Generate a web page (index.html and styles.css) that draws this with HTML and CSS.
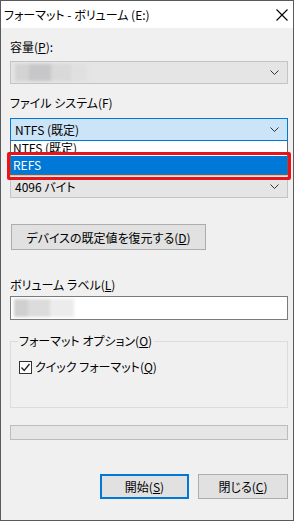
FILE: index.html
```html
<!DOCTYPE html>
<html lang="ja">
<head>
<meta charset="utf-8">
<link rel="stylesheet" href="styles.css">
</head>
<body>
<div class="window">
  <div class="titlebar">
    <span class="title">フォーマット - ボリューム (E:)</span>
    <svg class="close" width="12" height="12" viewBox="0 0 12 12"><path d="M0.5 0.5 L11.5 11.5 M11.5 0.5 L0.5 11.5" stroke="#000" stroke-width="1.1" fill="none"/></svg>
  </div>
  <div class="content">
    <div class="label l-cap">容量(<u>P</u>):</div>
    <div class="combo combo-gray combo-cap">
      <div class="blur"><span class="b1"></span><span class="b2"></span><span class="b3"></span><span class="b4"></span></div>
      <svg class="chev" width="9" height="5" viewBox="0 0 9 5"><path d="M0.5 0.5 L4.5 4.5 L8.5 0.5" stroke="#333" fill="none"/></svg>
    </div>
    <div class="label l-fs">ファイル システム(F)</div>
    <div class="fs-wrap">
      <div class="combo combo-open">
        <span class="ctext">NTFS (既定)</span>
        <svg class="chev" width="9" height="5" viewBox="0 0 9 5"><path d="M0.5 0.5 L4.5 4.5 L8.5 0.5" stroke="#333" fill="none"/></svg>
      </div>
      <div class="droplist">
        <div class="item">NTFS (既定)</div>
        <div class="item sel">REFS</div>
      </div>
      <div class="highlight"></div>
    </div>
    <div class="combo combo-gray combo-alloc">
      <span class="ctext">4096 バイト</span>
      <svg class="chev" width="9" height="5" viewBox="0 0 9 5"><path d="M0.5 0.5 L4.5 4.5 L8.5 0.5" stroke="#333" fill="none"/></svg>
    </div>
    <button class="btn btn-restore">デバイスの既定値を復元する(<u>D</u>)</button>
    <div class="label l-vol">ボリューム ラベル(<u>L</u>)</div>
    <div class="input">
      <div class="blur blur-w"><span class="b1"></span><span class="b2"></span><span class="b3"></span></div>
    </div>
    <fieldset class="group">
      <legend>フォーマット オプション(<u>O</u>)</legend>
      <div class="check-row">
        <span class="checkbox"><svg width="11" height="11" viewBox="0 0 11 11"><path d="M1.5 5.5 L4.2 8.5 L9.5 2" stroke="#222" stroke-width="1.3" fill="none"/></svg></span>
        <span>クイック フォーマット(<u>Q</u>)</span>
      </div>
    </fieldset>
    <div class="progress"></div>
    <div class="actions">
      <button class="btn btn-act btn-focus">開始(<u>S</u>)</button>
      <button class="btn btn-act">閉じる(<u>C</u>)</button>
    </div>
  </div>
</div>
</body>
</html>
```
FILE: styles.css
```css
* { box-sizing: border-box; }
html, body { margin: 0; padding: 0; background: #fff; }
body {
  font-family: "Noto Sans CJK JP", "Noto Sans", sans-serif;
  font-size: 12px;
  color: #000;
  font-feature-settings: "palt";
}
.window {
  width: 294px;
  height: 521px;
  border: 1px solid #5a5a5a;
  background: #f0f0f0;
  display: flex;
  flex-direction: column;
}
.titlebar {
  height: 27px;
  background: #fff;
  display: flex;
  align-items: center;
  justify-content: space-between;
  padding: 0 5px 0 3px;
  flex: none;
}
.title { font-size: 12px; line-height: 16px; }
.content {
  padding: 0 5px 0 9px;
  display: flex;
  flex-direction: column;
  flex: 1;
}
.label { line-height: 16px; height: 16px; }
.l-cap { margin-top: 11px; }
.combo {
  height: 23px;
  border: 1px solid #adadad;
  display: flex;
  align-items: center;
  padding: 0 8px 0 4px;
  position: relative;
  flex: none;
}
.combo-gray { background: #e5e5e5; border-color: #c4c4c4; }
.combo-cap { margin-top: 6px; }
.chev { margin-left: auto; }
.ctext { line-height: 16px; }
.l-fs { margin-top: 11px; }
.fs-wrap { position: relative; margin-top: 7px; z-index: 2; }
.combo-open { background: #cce4f7; border-color: #0078d7; }
.droplist {
  position: absolute;
  left: 0;
  right: 0;
  top: 23px;
  background: #fff;
  border: 1px solid #646464;
  border-top: none;
}
.item { height: 15px; line-height: 14px; padding-left: 2px; overflow: hidden; }
.item.sel { height: 18px; line-height: 17px; background: #0078d7; color: #fff; }
.highlight {
  position: absolute;
  left: -3px;
  right: -3px;
  top: 34px;
  height: 28px;
  border: 3px solid #e8141c;
  border-radius: 2px;
}
.combo-alloc { margin-top: 34px; }
.btn {
  font-family: inherit;
  font-size: 12px;
  font-feature-settings: "palt";
  color: #000;
  background: #e1e1e1;
  border: 1px solid #adadad;
  padding: 0;
  margin: 0;
}
.btn-restore {
  margin-top: 26px;
  margin-left: 1px;
  width: 195px;
  height: 26px;
  flex: none;
}
.l-vol { margin-top: 27px; }
.input {
  margin-top: 3px;
  height: 24px;
  background: #fff;
  border: 1px solid #7a7a7a;
  overflow: hidden;
  flex: none;
}
.blur {
  display: flex;
  height: 100%;
  padding: 2px 0 2px 3px;
  filter: blur(1.5px);
}
.blur span { display: block; height: 100%; }
.combo .blur { position: absolute; left: 1px; top: 0; bottom: 0; }
.b1 { width: 14px; background: #d3d3d3; }
.b2 { width: 22px; background: #c7c7c9; }
.b3 { width: 20px; background: #d9d9d9; }
.b4 { width: 16px; background: #e0e0e0; }
.blur-w .b1 { background: #cfcfcf; }
.blur-w .b2 { background: #dcdcdc; }
.blur-w .b3 { width: 24px; background: #ececec; }
.group {
  margin: 13px 0 0 0;
  padding: 0 0 0 8px;
  height: 75px;
  border: 1px solid #dcdcdc;
  min-width: 0;
  flex: none;
}
.group legend {
  padding: 0 2px 0 1px;
  line-height: 16px;
  margin-left: -1px;
}
.check-row {
  display: flex;
  align-items: center;
  gap: 3px;
  margin-top: 10px;
  line-height: 16px;
}
.checkbox {
  width: 13px;
  height: 13px;
  border: 1px solid #333;
  background: #fff;
  display: flex;
  align-items: center;
  justify-content: center;
}
.progress {
  margin-top: 17px;
  height: 15px;
  background: #e6e6e6;
  border: 1px solid #bcbcbc;
  flex: none;
}
.actions {
  margin-top: 34px;
  display: flex;
  justify-content: flex-end;
  gap: 9px;
}
.btn-act { width: 89px; height: 25px; }
.btn-act + .btn-act { width: 90px; }
.btn-focus { border: 2px solid #0078d7; }
```
